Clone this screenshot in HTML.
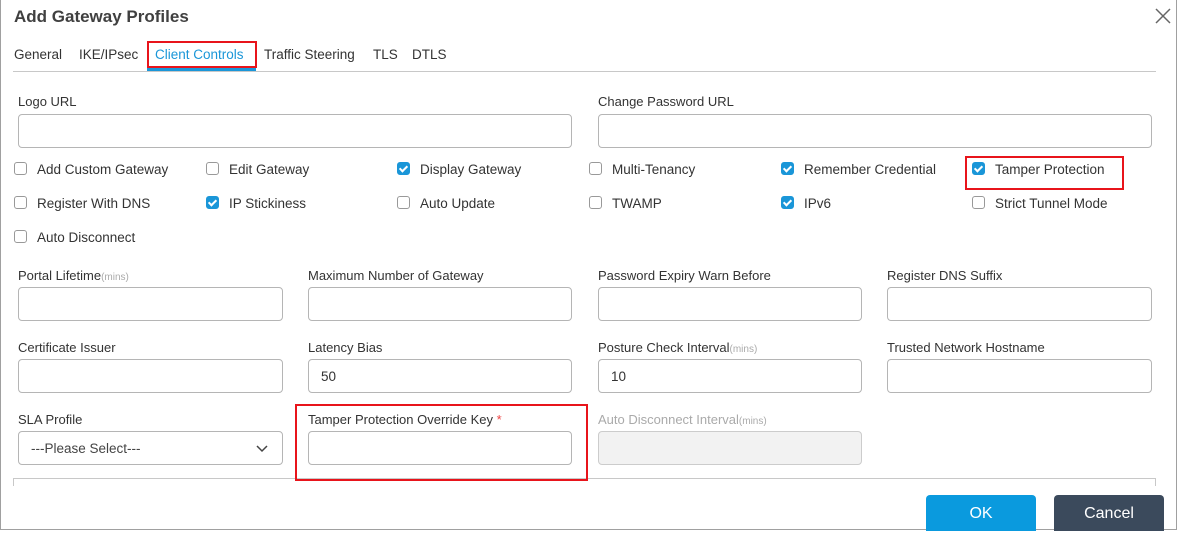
<!DOCTYPE html>
<html><head><style>
*{box-sizing:border-box;margin:0;padding:0}
body{width:1177px;height:530px;position:relative;overflow:hidden;background:#fff;font-family:"Liberation Sans",sans-serif;color:#333;font-size:13px}
.a{position:absolute;white-space:nowrap}
.frame{position:absolute;left:0;top:0;width:1177px;height:530px;border:1px solid #a0a0a0;border-top:none}
.in{position:absolute;height:34px;border:1px solid #b5b5b5;border-radius:4px;background:#fff;font-size:13.5px;padding:0 12px;line-height:34px;color:#333}
.lb{position:absolute;font-size:13px;color:#333;white-space:nowrap}
.mins{font-size:10px;color:#aaa}
.cb{position:absolute;width:13px;height:13px;border:1px solid #999;border-radius:3px;background:#fff}
.cb.on{background:#1a96d8;border-color:#1a96d8}
.cb.on::after{content:"";position:absolute;left:3px;top:1px;width:3px;height:6px;border:solid #fff;border-width:0 2px 2px 0;transform:rotate(45deg)}
.cl{position:absolute;font-size:13.5px;color:#333;white-space:nowrap}
.red{position:absolute;border:2px solid #e8141b}
</style></head><body>
<div class="frame"></div>
<div class="a" style="left:14px;top:7px;font-size:17px;font-weight:bold;color:#404040">Add Gateway Profiles</div>
<svg class="a" style="left:1155px;top:8px" width="16" height="16"><path d="M1 1L15 15M15 1L1 15" stroke="#666" stroke-width="1.5"/></svg>
<div class="a" style="left:14px;top:47px;font-size:13.5px">General</div>
<div class="a" style="left:79px;top:47px;font-size:13.5px">IKE/IPsec</div>
<div class="a" style="left:155px;top:47px;font-size:13.5px;color:#1a96d8">Client Controls</div>
<div class="a" style="left:264px;top:47px;font-size:13.5px">Traffic Steering</div>
<div class="a" style="left:373px;top:47px;font-size:13.5px">TLS</div>
<div class="a" style="left:412px;top:47px;font-size:13.5px">DTLS</div>
<div class="a" style="left:13px;top:71px;width:1143px;height:1px;background:#c8c8c8"></div>
<div class="a" style="left:147px;top:68px;width:109px;height:3px;background:#1a96d8"></div>
<div class="red" style="left:147px;top:41px;width:110px;height:27px"></div>

<div class="lb" style="left:18px;top:94px">Logo URL</div>
<div class="in" style="left:18px;top:114px;width:554px"></div>
<div class="lb" style="left:598px;top:94px">Change Password URL</div>
<div class="in" style="left:598px;top:114px;width:554px"></div>

<div class="cb" style="left:14px;top:162px"></div><div class="cl" style="left:37px;top:162px">Add Custom Gateway</div>
<div class="cb" style="left:206px;top:162px"></div><div class="cl" style="left:229px;top:162px">Edit Gateway</div>
<div class="cb on" style="left:397px;top:162px"></div><div class="cl" style="left:420px;top:162px">Display Gateway</div>
<div class="cb" style="left:589px;top:162px"></div><div class="cl" style="left:612px;top:162px">Multi-Tenancy</div>
<div class="cb on" style="left:781px;top:162px"></div><div class="cl" style="left:804px;top:162px">Remember Credential</div>
<div class="cb on" style="left:972px;top:162px"></div><div class="cl" style="left:995px;top:162px">Tamper Protection</div>
<div class="red" style="left:965px;top:156px;width:159px;height:34px"></div>

<div class="cb" style="left:14px;top:196px"></div><div class="cl" style="left:37px;top:196px">Register With DNS</div>
<div class="cb on" style="left:206px;top:196px"></div><div class="cl" style="left:229px;top:196px">IP Stickiness</div>
<div class="cb" style="left:397px;top:196px"></div><div class="cl" style="left:420px;top:196px">Auto Update</div>
<div class="cb" style="left:589px;top:196px"></div><div class="cl" style="left:612px;top:196px">TWAMP</div>
<div class="cb on" style="left:781px;top:196px"></div><div class="cl" style="left:804px;top:196px">IPv6</div>
<div class="cb" style="left:972px;top:196px"></div><div class="cl" style="left:995px;top:196px">Strict Tunnel Mode</div>
<div class="cb" style="left:14px;top:230px"></div><div class="cl" style="left:37px;top:230px">Auto Disconnect</div>

<div class="lb" style="left:18px;top:268px">Portal Lifetime<span class="mins">(mins)</span></div>
<div class="in" style="left:18px;top:287px;width:265px"></div>
<div class="lb" style="left:308px;top:268px">Maximum Number of Gateway</div>
<div class="in" style="left:308px;top:287px;width:264px"></div>
<div class="lb" style="left:598px;top:268px">Password Expiry Warn Before</div>
<div class="in" style="left:598px;top:287px;width:264px"></div>
<div class="lb" style="left:887px;top:268px">Register DNS Suffix</div>
<div class="in" style="left:887px;top:287px;width:265px"></div>

<div class="lb" style="left:18px;top:340px">Certificate Issuer</div>
<div class="in" style="left:18px;top:359px;width:265px"></div>
<div class="lb" style="left:308px;top:340px">Latency Bias</div>
<div class="in" style="left:308px;top:359px;width:264px">50</div>
<div class="lb" style="left:598px;top:340px">Posture Check Interval<span class="mins">(mins)</span></div>
<div class="in" style="left:598px;top:359px;width:264px">10</div>
<div class="lb" style="left:887px;top:340px">Trusted Network Hostname</div>
<div class="in" style="left:887px;top:359px;width:265px"></div>

<div class="lb" style="left:18px;top:412px">SLA Profile</div>
<div class="in" style="left:18px;top:431px;width:265px;color:#444">---Please Select---</div>
<svg class="a" style="left:256px;top:445px" width="12" height="8"><path d="M1 1L6 6L11 1" stroke="#444" stroke-width="1.5" fill="none"/></svg>
<div class="lb" style="left:308px;top:412px">Tamper Protection Override Key <span style="color:#e44">*</span></div>
<div class="in" style="left:308px;top:431px;width:264px"></div>
<div class="lb" style="left:598px;top:412px;color:#aaa">Auto Disconnect Interval<span class="mins">(mins)</span></div>
<div class="in" style="left:598px;top:431px;width:264px;background:#f2f2f2;border-color:#ccc"></div>

<div class="a" style="left:13px;top:478px;width:1143px;height:1px;background:#c8c8c8"></div>
<div class="a" style="left:13px;top:478px;width:1px;height:8px;background:#c8c8c8"></div>
<div class="a" style="left:1155px;top:478px;width:1px;height:8px;background:#c8c8c8"></div>
<div class="red" style="left:295px;top:404px;width:293px;height:77px"></div>

<div class="a" style="left:926px;top:495px;width:110px;height:36px;background:#0a9ade;border-radius:4px 4px 0 0;color:#fff;font-size:16px;text-align:center;line-height:38px">OK</div>
<div class="a" style="left:1054px;top:495px;width:110px;height:36px;background:#3b4a5c;border-radius:4px 4px 0 0;color:#fff;font-size:16px;text-align:center;line-height:38px">Cancel</div>
</body></html>
